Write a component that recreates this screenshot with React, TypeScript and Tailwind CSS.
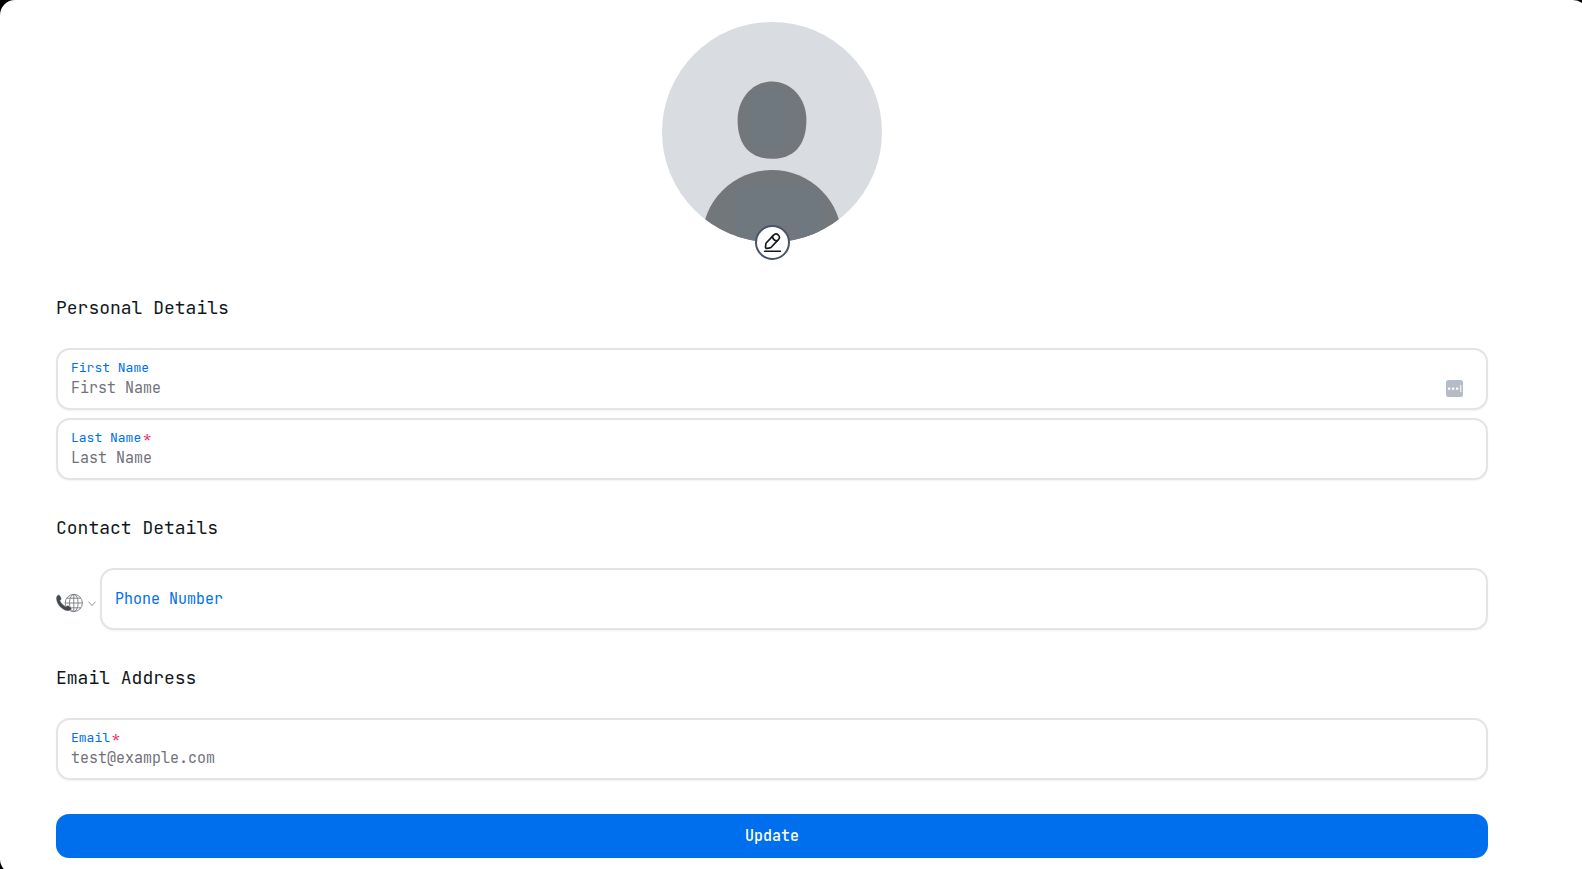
import type { ReactNode } from "react";

function Avatar() {
  return (
    <div className="relative size-[220px]">
      <svg viewBox="0 0 220 220" className="size-full" role="img" aria-label="Profile">
        <defs>
          <clipPath id="avatar-clip">
            <circle cx="110" cy="110" r="110" />
          </clipPath>
        </defs>
        <g clipPath="url(#avatar-clip)">
          <rect width="220" height="220" fill="#d9dce1" />
          <path
            d="M110 59.500C129 59.500 144.400 76 144.400 98C144.400 124 131 136.800 110 136.800C89 136.800 75.600 124 75.600 98C75.600 76 91 59.500 110 59.500Z"
            fill="#72777b"
          />
          <rect x="88" y="69" width="36" height="55" fill="#6f777f" />
          <circle cx="110" cy="218" r="70" fill="#71777b" />
          <rect x="74" y="167" width="84" height="53" fill="#6f777f" />
        </g>
      </svg>
      <button
        type="button"
        aria-label="Edit photo"
        className="absolute -bottom-[18px] left-[93px] flex size-[35px] items-center justify-center rounded-full border-2 border-[#475569] bg-white text-[#11181c]"
      >
        <svg
          viewBox="0 0 24 24"
          className="size-[21px] shrink-0"
          fill="none"
          stroke="currentColor"
          strokeWidth="1.9"
          strokeLinecap="round"
          strokeLinejoin="round"
        >
          <path d="M13.26 3.6 5.05 12.290c-.31.33-.61.98-.67 1.430l-.37 3.240c-.13 1.170.71 1.970 1.870 1.770l3.220-.55c.45-.08 1.080-.41 1.390-.75l8.210-8.690c1.420-1.500 2.060-3.210-.15-5.300-2.200-2.070-3.870-1.340-5.290.16Z" />
          <path d="M11.890 5.050a6.130 6.130 0 0 0 5.450 5.150" />
          <path d="M3 22h18" />
        </svg>
      </button>
    </div>
  );
}

function AutofillIcon() {
  return (
    <svg viewBox="0 0 17 17" className="size-[17px] shrink-0" aria-hidden="true">
      <rect width="17" height="17" rx="2.500" fill="#b5bcc8" />
      <g fill="#fff">
        <rect x="2" y="7.500" width="2.300" height="2.300" rx=".6" />
        <rect x="6" y="7.500" width="2.300" height="2.300" rx=".6" />
        <rect x="10" y="7.500" width="2.300" height="2.300" rx=".6" />
        <rect x="14.300" y="5" width="1" height="7" />
      </g>
    </svg>
  );
}

const boxClass =
  "h-[62px] rounded-[14px] border-2 border-[#e4e4e7] bg-white shadow-[0_1px_2px_0_rgba(0,0,0,0.05)]";

type FieldProps = {
  id: string;
  label: string;
  placeholder: string;
  type?: string;
  required?: boolean;
  icon?: ReactNode;
};

function Field({ id, label, placeholder, type = "text", required, icon }: FieldProps) {
  return (
    <div className={`${boxClass} flex flex-col pt-2 pr-[23px] pl-[13px]`}>
      <label htmlFor={id} className="text-[13px] leading-5 text-[#006fee]">
        {label}
        {required && <span className="ml-0.5 text-[#f31260]">*</span>}
      </label>
      <div className="flex h-5 items-center">
        <input
          id={id}
          type={type}
          required={required}
          placeholder={placeholder}
          className="h-5 min-w-0 flex-1 bg-transparent text-[15px] leading-5 outline-none placeholder:text-[#71717a]"
        />
        {icon}
      </div>
    </div>
  );
}

function CountryPicker() {
  return (
    <div className="relative flex w-11 shrink-0 items-center pt-2">
      <svg viewBox="0 0 28 20" className="h-5 w-7" aria-hidden="true">
        <g fill="none" stroke="#777b7f" strokeWidth=".9">
          <circle cx="17.800" cy="10" r="8.600" />
          <ellipse cx="17.800" cy="10" rx="4.300" ry="8.600" />
          <path d="M17.800 1.400v17.200M9.200 10h17.200M10.800 5.200h14M10.800 14.800h14" />
        </g>
        <path
          d="M1.200 2.500C2.300 1.500 3.600 1.700 4.300 2.900L5.400 5.100C5.900 6.300 5 6.900 4.200 7.600C5.300 10.300 7.300 12.300 10 13.500C10.800 12.700 11.500 12.100 12.600 12.700L14.900 14.100C16.300 15.200 15.400 16.800 14.300 17.500C12.500 18.500 9.800 17.900 7.200 16.400C3.500 14.200 1 10.800.3 7C0 5 .2 3.500 1.200 2.500Z"
          fill="#43484c"
          stroke="#fff"
          strokeWidth=".4"
        />
      </svg>
      <svg
        viewBox="0 0 8 8"
        className="ml-1 size-2"
        fill="none"
        stroke="#8e9194"
        strokeWidth="1"
        aria-hidden="true"
      >
        <path d="M.5 2.700 4 6.500 7.500 2.700" />
      </svg>
      <select
        aria-label="Phone number country"
        className="absolute inset-0 w-full cursor-pointer opacity-0"
      >
        <option value="ZZ">International</option>
      </select>
    </div>
  );
}

function Section({ title, children }: { title: string; children: ReactNode }) {
  return (
    <section className="mt-[34px]">
      <h2 className="mb-[26px] text-[18px] leading-7 text-[#11181c]">{title}</h2>
      {children}
    </section>
  );
}

export default function App() {
  return (
    <div className="min-h-screen overflow-hidden bg-black">
      <main className="-mr-[6px] -mb-[6px] min-h-screen rounded-[15px] bg-white pt-[22px] pr-[100px] pb-4 pl-14 font-['JetBrains_Mono','DejaVu_Sans_Mono',monospace]">
        <form>
          <div className="flex justify-center pb-[18px]">
            <Avatar />
          </div>

          <Section title="Personal Details">
            <div className="flex flex-col gap-2">
              <Field
                id="first-name"
                label="First Name"
                placeholder="First Name"
                icon={<AutofillIcon />}
              />
              <Field id="last-name" label="Last Name" placeholder="Last Name" required />
            </div>
          </Section>

          <Section title="Contact Details">
            <div className="flex">
              <CountryPicker />
              <div className={`${boxClass} flex flex-1 px-[13px]`}>
                <input
                  type="tel"
                  aria-label="Phone Number"
                  placeholder="Phone Number"
                  className="w-full bg-transparent text-[15px] outline-none placeholder:text-[#006fee]"
                />
              </div>
            </div>
          </Section>

          <Section title="Email Address">
            <Field
              id="email"
              label="Email"
              type="email"
              placeholder="test@example.com"
              required
            />
          </Section>

          <button
            type="submit"
            className="mt-[34px] h-11 w-full rounded-[13px] bg-[#006fee] text-[15px] font-medium text-white"
          >
            Update
          </button>
        </form>
      </main>
    </div>
  );
}
